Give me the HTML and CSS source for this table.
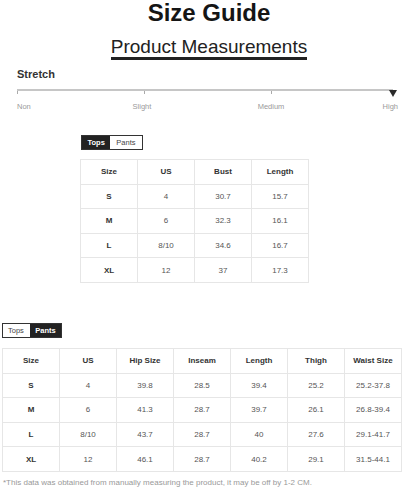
FILE: index.html
```html
<!DOCTYPE html>
<html>
<head>
<meta charset="utf-8">
<link rel="stylesheet" href="styles.css">
</head>
<body>
<header class="head">
  <h1 class="title">Size Guide</h1>
  <div class="sub-wrap"><span class="subtitle">Product Measurements</span></div>
</header>

<section class="stretch">
  <h2 class="stretch-title">Stretch</h2>
  <div class="track">
    <span class="tick t0"></span>
    <span class="tick t1"></span>
    <span class="tick t2"></span>
    <span class="marker"></span>
  </div>
  <div class="labels">
    <span class="lbl l0">Non</span>
    <span class="lbl l1">Slight</span>
    <span class="lbl l2">Medium</span>
    <span class="lbl l3">High</span>
  </div>
</section>

<section class="tops">
  <div class="tabs">
    <span class="tab active">Tops</span>
    <span class="tab">Pants</span>
  </div>
  <table class="grid grid-tops">
    <tr><th>Size</th><th>US</th><th>Bust</th><th>Length</th></tr>
    <tr><th>S</th><td>4</td><td>30.7</td><td>15.7</td></tr>
    <tr><th>M</th><td>6</td><td>32.3</td><td>16.1</td></tr>
    <tr><th>L</th><td>8/10</td><td>34.6</td><td>16.7</td></tr>
    <tr><th>XL</th><td>12</td><td>37</td><td>17.3</td></tr>
  </table>
</section>

<section class="pants">
  <div class="tabs">
    <span class="tab tab-a">Tops</span>
    <span class="tab active tab-b">Pants</span>
  </div>
  <table class="grid grid-pants">
    <tr><th>Size</th><th>US</th><th>Hip Size</th><th>Inseam</th><th>Length</th><th>Thigh</th><th>Waist Size</th></tr>
    <tr><th>S</th><td>4</td><td>39.8</td><td>28.5</td><td>39.4</td><td>25.2</td><td>25.2-37.8</td></tr>
    <tr><th>M</th><td>6</td><td>41.3</td><td>28.7</td><td>39.7</td><td>26.1</td><td>26.8-39.4</td></tr>
    <tr><th>L</th><td>8/10</td><td>43.7</td><td>28.7</td><td>40</td><td>27.6</td><td>29.1-41.7</td></tr>
    <tr><th>XL</th><td>12</td><td>46.1</td><td>28.7</td><td>40.2</td><td>29.1</td><td>31.5-44.1</td></tr>
  </table>
  <p class="note">*This data was obtained from manually measuring the product, it may be off by 1-2 CM.</p>
</section>
</body>
</html>
```

FILE: styles.css
```css
html, body {
  margin: 0;
  padding: 0;
  background: #fff;
}
body {
  font-family: "Liberation Sans", Arial, sans-serif;
  color: #333;
  width: 404px;
  height: 488px;
  overflow: hidden;
}
.head {
  padding-left: 14px;
  text-align: center;
}
.title {
  margin: 0;
  font-size: 24px;
  line-height: 26px;
  font-weight: bold;
  color: #151515;
}
.sub-wrap {
  margin-top: 11px;
  line-height: 0;
}
.subtitle {
  display: inline-block;
  font-size: 19px;
  line-height: 19px;
  color: #222;
  padding-bottom: 1px;
  border-bottom: 3px solid #222;
}
.stretch {
  padding: 0 6px 0 17px;
}
.stretch-title {
  margin: 9px 0 0;
  font-size: 11px;
  line-height: 11px;
  font-weight: bold;
  color: #333;
}
.track {
  position: relative;
  margin-top: 9px;
  height: 8px;
  width: 376px;
  border-top: 2px solid #c6c6c6;
}
.tick {
  position: absolute;
  top: 0;
  width: 1px;
  height: 3px;
  background: #aaa;
}
.t0 { left: 0; }
.t1 { left: 127px; }
.t2 { left: 254px; }
.marker {
  position: absolute;
  top: -1px;
  right: -4px;
  width: 0;
  height: 0;
  border-left: 4px solid transparent;
  border-right: 4px solid transparent;
  border-top: 7px solid #2a2a2a;
}
.labels {
  position: relative;
  margin-top: 3px;
  height: 9px;
  font-size: 7.5px;
  line-height: 9px;
  color: #9a9a9a;
}
.lbl {
  position: absolute;
  top: 0;
}
.l0 { left: 0; }
.l1 { left: 125px; transform: translateX(-50%); }
.l2 { left: 254px; transform: translateX(-50%); }
.l3 { right: 0; }
.tops {
  margin-top: 24px;
  padding-left: 80px;
}
.tabs {
  display: flex;
  width: fit-content;
  border: 1px solid #333;
  height: 13px;
  font-size: 7.5px;
  line-height: 13px;
  color: #444;
}
.tops .tabs {
  margin-left: 1px;
}
.tab {
  display: block;
  padding: 0 6px;
}
.tab.active {
  background: #222;
  color: #fff;
  font-weight: bold;
  padding: 0 5.5px;
}
.tab-a { padding: 0 6px 0 5px; }
.tab-b { padding: 0 6px; }
.grid {
  border-collapse: collapse;
  table-layout: fixed;
  margin-top: 9px;
  font-size: 8px;
  color: #555;
}
.grid-tops { width: 229px; }
.grid-pants { width: 400px; margin-top: 10px; }
.grid tr {
  height: 24.6px;
}
.grid th, .grid td {
  border: 1px solid #e6e6e6;
  text-align: center;
  vertical-align: middle;
  padding: 0;
}
.grid th {
  font-weight: bold;
  color: #333;
}
.pants {
  margin-top: 40px;
  padding-left: 2px;
}
.note {
  margin: 6px 0 0 1px;
  font-size: 8px;
  line-height: 10px;
  color: #999;
  white-space: nowrap;
}
```
